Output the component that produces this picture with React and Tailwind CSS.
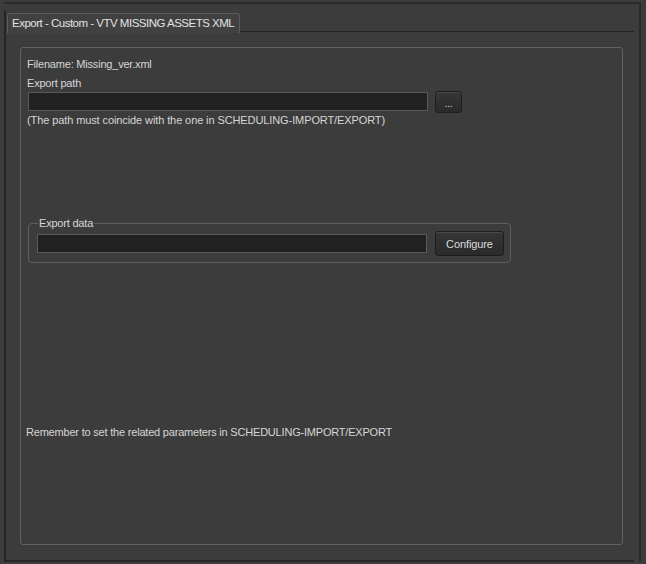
export default function App() {
  const font = { fontFamily: '"Liberation Sans", Arial, sans-serif' };
  return (
    <div
      className="w-[646px] h-[564px] bg-[#3c3c3c] pt-[2px] pl-[4px] pr-[5px] overflow-hidden text-[11px] tracking-[-0.2px] text-[#d6d6d6]"
      style={font}
    >
      <div className="h-[560px] border-t-2 border-r-2 border-[#2a2a2a] pt-[6px]">
        <div className="w-[630px] h-[552px] border-l-2 border-b-2 border-[#262626] flex flex-col">
          <div className="flex pt-[3px] h-[22px]">
            <div className="relative z-10 ml-[1px] h-[20px] w-[233px] border border-b-0 border-[#5c5c5c] rounded-t-[3px] bg-[#414141] pl-[4px] text-[11.5px] tracking-[-0.5px] leading-[18px] text-[#e2e2e2] whitespace-nowrap">
              Export - Custom - VTV MISSING ASSETS XML
            </div>
            <div className="flex-1 border-b border-[#232323]" />
          </div>
          <div className="flex-1 pl-[14px] pt-[15px]">
            <div className="w-[603px] h-[498px] border border-[#626262] rounded-[3px] pl-[6px] pt-[8px] flex flex-col">
              <div className="leading-[16px] h-[16px] whitespace-nowrap">Filename: Missing_ver.xml</div>
              <div className="leading-[16px] h-[16px] mt-[3px] whitespace-nowrap">Export path</div>
              <div className="flex items-center h-[21px] gap-[7px] ml-[1px]">
                <div className="w-[400px] h-[19px] bg-[#212121] border border-[#5a5a5a]" />
                <button className="w-[27px] h-[22px] rounded-[3px] border border-[#1e1e1e] bg-gradient-to-b from-[#363636] to-[#2a2a2a] shadow-[inset_0_1px_0_#4a4a4a] text-[10px] leading-[14px] text-[#d0d0d0] pt-[4px]">
                  ...
                </button>
              </div>
              <div className="leading-[16px] h-[16px] whitespace-nowrap tracking-[-0.1px]">(The path must coincide with the one in SCHEDULING-IMPORT/EXPORT)</div>
              <fieldset className="mt-[87px] ml-[1px] w-[483px] border border-[#5e5e5e] rounded-[4px] pl-[8px] pb-[6px]">
                <legend className="ml-[1px] px-[1px] leading-[16px] text-[#d6d6d6] whitespace-nowrap">Export data</legend>
                <div className="flex items-center h-[25px] gap-[8px]">
                  <div className="w-[390px] h-[19px] bg-[#212121] border border-[#5a5a5a]" />
                  <button className="w-[69px] h-[25px] rounded-[3px] border border-[#1c1c1c] bg-gradient-to-b from-[#363636] to-[#2a2a2a] shadow-[inset_0_1px_0_#4a4a4a] text-[11px] tracking-[-0.1px] leading-[16px] text-[#dcdcdc]">
                    Configure
                  </button>
                </div>
              </fieldset>
              <div className="leading-[16px] h-[16px] mt-[161px] -ml-[1px] whitespace-nowrap tracking-[-0.2px]">Remember to set the related parameters in SCHEDULING-IMPORT/EXPORT</div>
            </div>
          </div>
        </div>
      </div>
    </div>
  );
}
